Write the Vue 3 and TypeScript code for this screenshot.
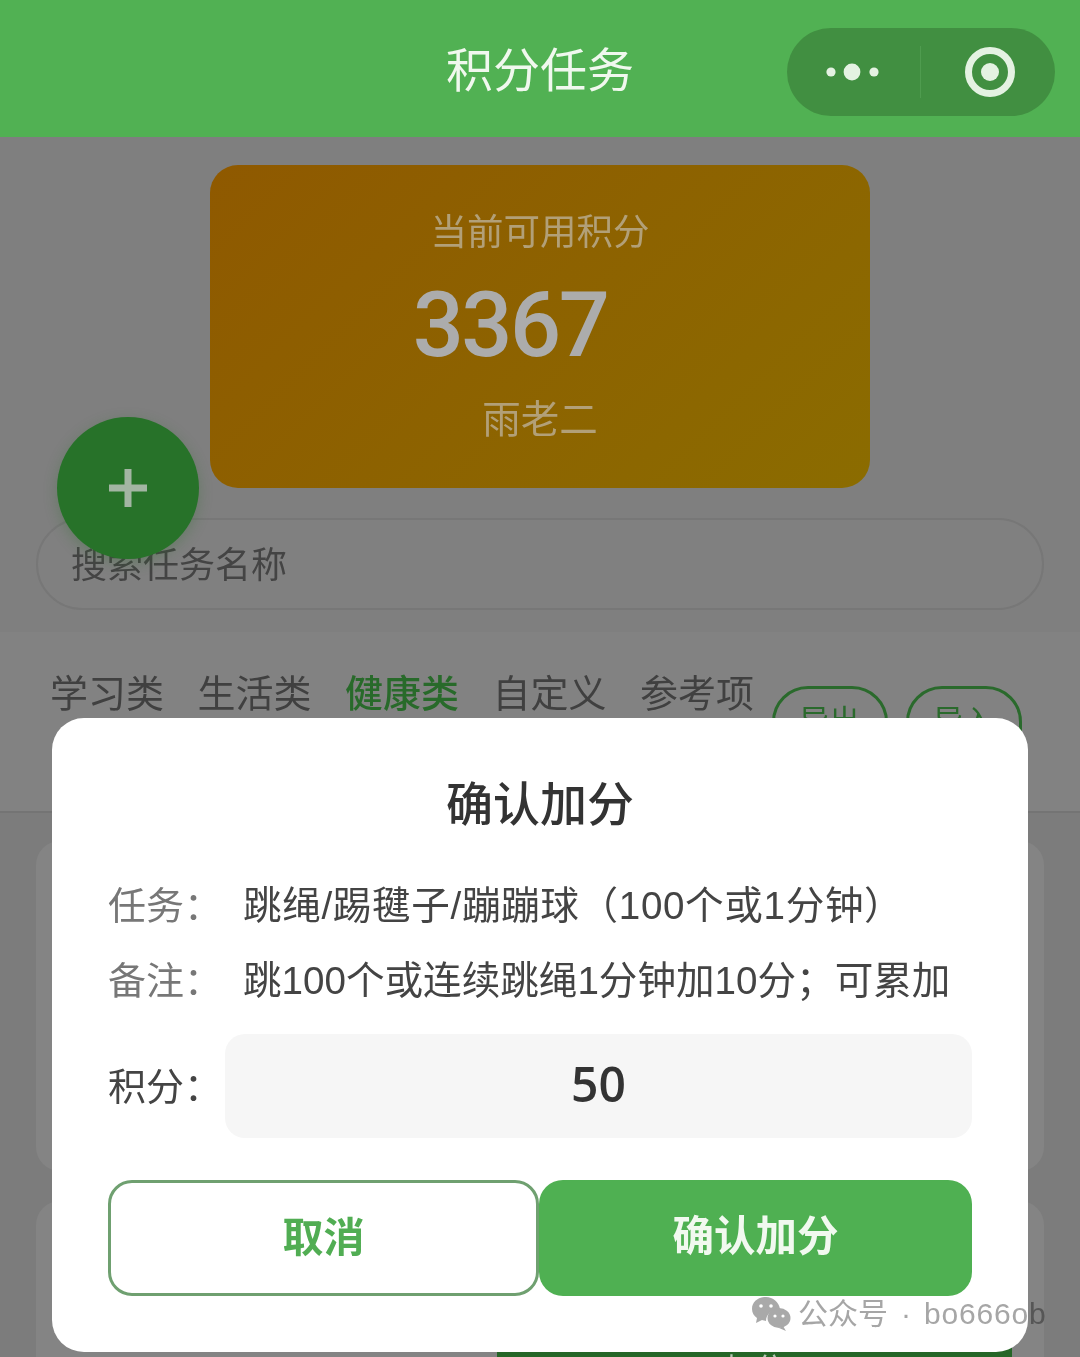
<template>
  <div class="page">
    <header class="nav">
      <span class="nav-title">积分任务</span>
      <div class="capsule">
        <div class="capsule-side dots">
          <svg width="54" height="18" viewBox="0 0 54 18"><circle cx="5" cy="9" r="4.6" fill="#e4f2e2" /><circle cx="26" cy="9" r="8.4" fill="#e4f2e2" /><circle cx="48" cy="9" r="4.6" fill="#e4f2e2" /></svg>
        </div>
        <div class="capsule-line"></div>
        <div class="capsule-side ring">
          <svg width="50" height="50" viewBox="0 0 50 50"><circle cx="25" cy="25" r="21.5" fill="none" stroke="#e4f2e2" stroke-width="7" /><circle cx="25" cy="25" r="9" fill="#e4f2e2" /></svg>
        </div>
      </div>
    </header>

    <section class="top">
      <div class="points-card">
        <div class="points-label">当前可用积分</div>
        <div class="points-value">3367</div>
        <div class="points-name">雨老二</div>
      </div>
      <div class="search">搜索任务名称</div>
    </section>

    <section class="tabs">
      <span v-for="t in tabs" :key="t" class="tab" :class="{ active: t === '健康类' }">{{ t }}</span>
      <div class="tab-btns">
        <span class="outline-btn">导出</span>
        <span class="outline-btn">导入</span>
      </div>
    </section>

    <section class="list">
      <div class="task-card"></div>
      <div class="task-card">
        <div class="task-add">加分</div>
      </div>
    </section>

    <div class="fab">
      <svg width="40" height="40" viewBox="0 0 40 40"><path d="M20 1v38M1 20h38" stroke="#a3b5a3" stroke-width="7" fill="none" /></svg>
    </div>

    <div class="dialog">
      <div class="dialog-title">确认加分</div>
      <div class="row first">
        <span class="row-label">任务：</span>
        <span class="row-text wide">跳绳/踢毽子/蹦蹦球（100个或1分钟）</span>
      </div>
      <div class="row second">
        <span class="row-label">备注：</span>
        <span class="row-text">跳100个或连续跳绳1分钟加10分；可累加</span>
      </div>
      <div class="input-row">
        <span class="input-label">积分：</span>
        <div class="input">50</div>
      </div>
      <div class="actions">
        <div class="btn cancel">取消</div>
        <div class="btn confirm">确认加分</div>
      </div>
    </div>

    <div class="watermark">
      <svg width="40" height="36" viewBox="0 0 40 36">
        <path d="M15 1C7 1 1 6 1 13c0 4 2 7 5 9l-1 5 6-3c1 0 3 1 4 1 0-7 6-12 14-12C28 6 22 1 15 1z" fill="#a9a9a9" />
        <ellipse cx="28" cy="22" rx="11.5" ry="10" fill="#a9a9a9" />
        <path d="M32 30l3 5-7-3z" fill="#a9a9a9" />
        <circle cx="10" cy="10" r="1.8" fill="#fff" /><circle cx="20" cy="10" r="1.8" fill="#fff" />
        <circle cx="24" cy="20" r="1.6" fill="#fff" /><circle cx="32" cy="20" r="1.6" fill="#fff" />
      </svg>
      <span class="wm-name">公众号</span>
      <span class="wm-dot">·</span>
      <span class="wm-id">bo666ob</span>
    </div>
  </div>
</template>

<script setup lang="ts">
const tabs: string[] = ['学习类', '生活类', '健康类', '自定义', '参考项']
</script>

<style>
html, body { margin: 0; background: #7c7c7c; }
</style>

<style scoped>
.page {
  position: relative;
  width: 1080px;
  height: 1357px;
  overflow: hidden;
  background: #7c7c7c;
  font-family: "Liberation Sans", "Noto Sans CJK SC", sans-serif;
}

.nav {
  height: 137px;
  background: #51b153;
  display: flex;
  align-items: center;
  justify-content: center;
  position: relative;
}
.nav-title {
  color: #f0f8ee;
  font-size: 47px;
  line-height: 50px;
  margin-top: 5px;
}
.capsule {
  position: absolute;
  left: 787px;
  top: 28px;
  width: 268px;
  height: 88px;
  border-radius: 44px;
  background: #418f41;
  display: flex;
  align-items: center;
}
.capsule-side {
  flex: 1;
  display: flex;
  align-items: center;
  justify-content: center;
}
.capsule-side.dots {
  padding-right: 2px;
  padding-bottom: 1px;
}
.capsule-side.ring {
  padding-left: 3px;
  padding-bottom: 1px;
}
.capsule-line {
  width: 1px;
  height: 52px;
  background: #4f9c4f;
}

.top {
  height: 495px;
  background: #7f7f7f;
  box-sizing: border-box;
  padding-top: 28px;
  display: flex;
  flex-direction: column;
  align-items: center;
}
.points-card {
  width: 660px;
  height: 323px;
  border-radius: 28px;
  background: linear-gradient(135deg, #8f5900, #8b6c00);
  color: #b2a078;
  display: flex;
  flex-direction: column;
  align-items: center;
  box-sizing: border-box;
  padding-top: 45px;
}
.points-label {
  font-size: 36.5px;
  line-height: 46px;
}
.points-value {
  font-family: Roboto, "Liberation Sans", sans-serif;
  font-size: 90px;
  font-weight: 500;
  letter-spacing: -2.5px;
  line-height: 90px;
  margin-top: 25px;
  margin-right: 60px;
  color: #acacac;
}
.points-name {
  font-size: 38.5px;
  line-height: 46px;
  margin-top: 26px;
}
.search {
  width: 1008px;
  height: 92px;
  box-sizing: border-box;
  margin-top: 30px;
  border: 2px solid #777;
  border-radius: 46px;
  background: #808080;
  color: #444;
  font-size: 36px;
  line-height: 92px;
  padding-left: 33px;
}

.tabs {
  height: 181px;
  box-sizing: border-box;
  background: #828282;
  border-bottom: 2px solid #747474;
  padding: 37px 22px 0 50px;
  display: flex;
  align-items: flex-start;
  gap: 33.5px;
}
.tab {
  font-size: 38px;
  line-height: 50px;
  color: #404040;
  white-space: nowrap;
}
.tab.active {
  color: #286a2a;
  font-weight: 500;
}
.tab-btns {
  display: flex;
  gap: 18px;
  margin-left: -16px;
  margin-top: 17px;
}
.outline-btn {
  width: 116px;
  height: 90px;
  box-sizing: border-box;
  border: 3px solid #2a6a2c;
  border-radius: 36px;
  color: #2a6a2c;
  font-size: 30px;
  line-height: 46px;
  text-align: center;
  padding-top: 9px;
}

.list {
  padding: 28px 36px 0;
  display: flex;
  flex-direction: column;
  gap: 30px;
}
.task-card {
  height: 330px;
  border-radius: 24px;
  background: #848484;
  position: relative;
}
.task-add {
  position: absolute;
  left: 461px;
  top: 144px;
  width: 515px;
  height: 60px;
  background: #256627;
  color: #b5c7b5;
  font-size: 30px;
  text-align: center;
  line-height: 40px;
  padding-top: 4px;
}

.fab {
  position: absolute;
  left: 57px;
  top: 417px;
  width: 142px;
  height: 142px;
  border-radius: 50%;
  background: #277229;
  box-shadow: 0 4px 14px rgba(40, 110, 40, 0.3);
  display: flex;
  align-items: center;
  justify-content: center;
}

.dialog {
  position: absolute;
  left: 52px;
  top: 718px;
  width: 976px;
  height: 634px;
  border-radius: 32px;
  background: #fff;
  box-sizing: border-box;
  padding: 0 56px;
}
.dialog-title {
  margin-top: 60px;
  text-align: center;
  font-size: 47px;
  font-weight: 500;
  line-height: 54px;
  color: #333;
}
.row {
  display: flex;
  font-size: 38px;
  line-height: 50px;
  white-space: nowrap;
}
.row.first { margin-top: 49px; }
.row.second { margin-top: 25px; }
.row-label {
  width: 135px;
  color: #777;
}
.row-text {
  color: #444;
  font-size: 38.6px;
}
.row-text.wide {
  letter-spacing: 0.65px;
}
.input-row {
  display: flex;
  align-items: center;
  margin-top: 28px;
}
.input-label {
  width: 117px;
  font-size: 38px;
  line-height: 50px;
  margin-top: 2px;
  color: #444;
}
.input {
  flex: 1;
  height: 104px;
  border-radius: 20px;
  background: #f6f6f6;
  text-align: center;
  font-family: "Open Sans", "Liberation Sans", sans-serif;
  font-size: 48px;
  font-weight: 600;
  line-height: 100px;
  color: #333;
}
.actions {
  display: flex;
  margin-top: 42px;
}
.btn {
  height: 116px;
  box-sizing: border-box;
  border-radius: 24px;
  text-align: center;
  font-weight: 700;
}
.cancel {
  width: 431px;
  border: 3px solid #6fa070;
  color: #51ad53;
  font-size: 41px;
  line-height: 110px;
}
.confirm {
  flex: 1;
  background: #4fb052;
  color: #f1f9ef;
  font-size: 41.5px;
  line-height: 114px;
}

.watermark {
  position: absolute;
  left: 751px;
  top: 1296px;
  display: flex;
  align-items: center;
  font-size: 30px;
  line-height: 36px;
  color: #a6a6a6;
  white-space: nowrap;
  mix-blend-mode: multiply;
}
.wm-name {
  margin-left: 7px;
}
.wm-dot {
  margin-left: 13px;
}
.wm-id {
  margin-left: 13px;
  letter-spacing: 0.8px;
}
</style>
